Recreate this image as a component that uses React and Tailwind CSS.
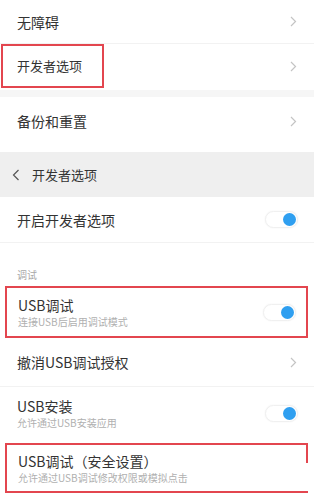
import React from 'react';

const Chevron = () => (
  <svg width="7" height="11" viewBox="0 0 7 11" className="mr-[17px] shrink-0">
    <polyline points="1,1 5.5,5.5 1,10" fill="none" stroke="#c4c4c4" strokeWidth="1.2" />
  </svg>
);

const Toggle = () => (
  <div className="mr-[16px] flex h-[17px] w-[33px] shrink-0 items-center justify-end rounded-full border border-[#f0f0f0] bg-white pr-[1px] shadow-[0_0_2px_rgba(0,0,0,0.06)]">
    <div className="h-[13px] w-[13px] rounded-full bg-[#2f9ff0]" />
  </div>
);

const Label = ({ title, sub }) => (
  <div className="flex flex-col">
    <span className="text-[14px] leading-[18px] text-[#333]">{title}</span>
    {sub && <span className="mt-[1px] text-[10px] leading-[14px] text-[#b0b0b0]">{sub}</span>}
  </div>
);

export default function App() {
  return (
    <div
      className="w-[314px] h-[500px] overflow-hidden bg-white"
      style={{ fontFamily: '"Noto Sans CJK SC", "Noto Sans", sans-serif' }}
    >
      {/* settings list */}
      <div className="flex h-[44px] items-center justify-between border-b border-[#f2f2f2] pl-[17px]">
        <Label title="无障碍" />
        <Chevron />
      </div>
      <div className="flex h-[46px] items-start justify-between pl-[1px]">
        <div className="flex h-[44px] w-[103px] items-center border-2 border-[#e3464f] pl-[14px]">
          <span className="text-[13px] text-[#333]">开发者选项</span>
        </div>
        <div className="flex h-[44px] items-center">
          <Chevron />
        </div>
      </div>
      <div className="h-[7px] bg-[#f6f6f6]" />
      <div className="flex h-[48px] items-center justify-between pl-[17px]">
        <Label title="备份和重置" />
        <Chevron />
      </div>
      <div className="h-[7px]" />

      {/* developer options page */}
      <div className="flex h-[45px] items-center bg-[#efefef] pl-[12px]">
        <svg width="8" height="12" viewBox="0 0 8 12">
          <polyline points="6.5,1 1.5,6 6.5,11" fill="none" stroke="#555" strokeWidth="1.2" />
        </svg>
        <span className="ml-[12px] text-[13px] text-[#333]">开发者选项</span>
      </div>
      <div className="flex h-[46px] items-center justify-between border-b border-[#f2f2f2] pl-[17px]">
        <Label title="开启开发者选项" />
        <Toggle />
      </div>
      <div className="h-[43px] pl-[17px] pt-[17px]">
        <span className="text-[10px] leading-[14px] text-[#a8a8a8]">调试</span>
      </div>
      <div className="px-[5px] pr-[6px]">
        <div className="flex h-[52px] items-center justify-between border-2 border-[#e3464f] pl-[11px]">
          <Label title="USB调试" sub="连接USB后启用调试模式" />
          <div className="-mr-[6px]">
            <Toggle />
          </div>
        </div>
      </div>
      <div className="flex h-[49px] items-center justify-between border-b border-[#f2f2f2] pl-[17px]">
        <Label title="撤消USB调试授权" />
        <Chevron />
      </div>
      <div className="flex h-[52px] items-center justify-between pl-[17px]">
        <Label title="USB安装" sub="允许通过USB安装应用" />
        <Toggle />
      </div>
      <div className="pl-[5px] pr-[6px] pt-[4px]">
        <div className="relative flex h-[50px] items-center border-2 border-r-0 border-[#e3464f] pl-[11px]">
          <Label title="USB调试（安全设置）" sub="允许通过USB调试修改权限或模拟点击" />
          <span className="absolute right-0 top-[-2px] h-[20px] w-[2px] bg-[#e3464f]" />
        </div>
      </div>
    </div>
  );
}
